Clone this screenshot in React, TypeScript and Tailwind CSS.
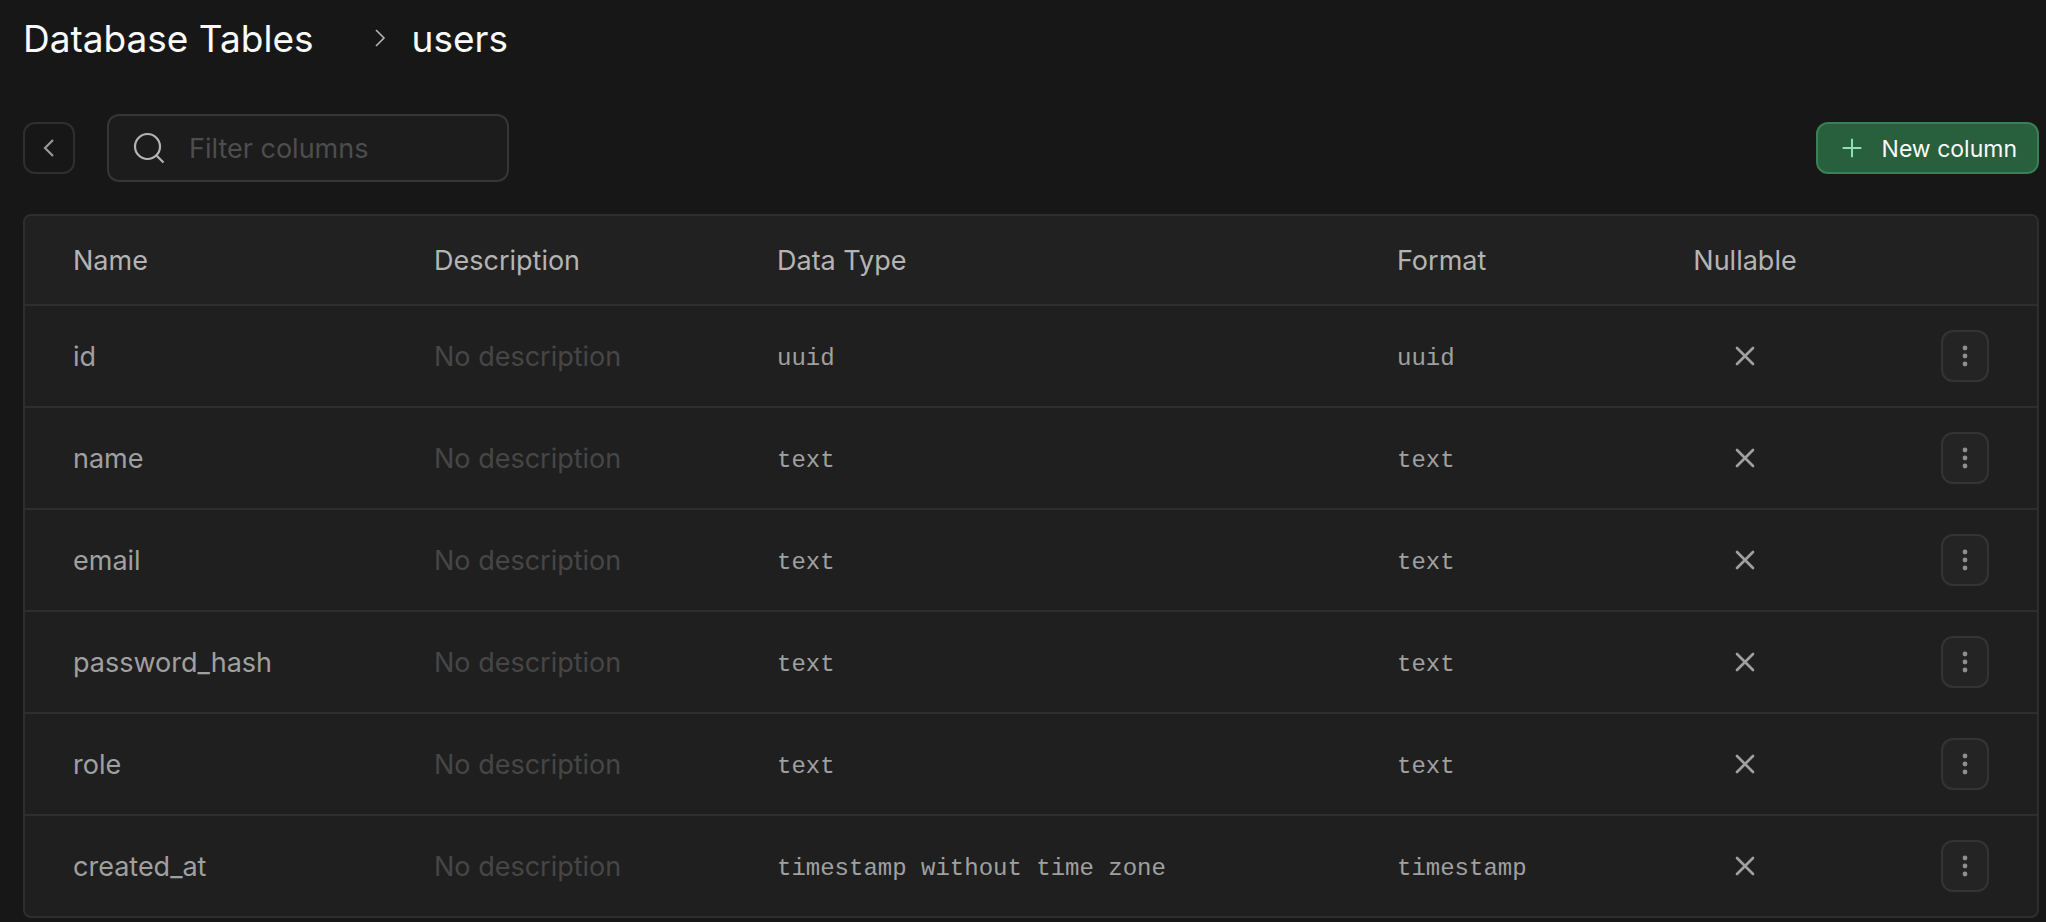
import { useState } from "react";

type Column = { name: string; dataType: string; format: string };

const columns: Column[] = [
  { name: "id", dataType: "uuid", format: "uuid" },
  { name: "name", dataType: "text", format: "text" },
  { name: "email", dataType: "text", format: "text" },
  { name: "password_hash", dataType: "text", format: "text" },
  { name: "role", dataType: "text", format: "text" },
  { name: "created_at", dataType: "timestamp without time zone", format: "timestamp" },
];

function Icon({ d, className }: { d: string; className: string }) {
  return (
    <svg viewBox="0 0 24 24" fill="none" stroke="currentColor" className={className} aria-hidden="true">
      <path d={d} />
    </svg>
  );
}

function Breadcrumb() {
  return (
    <nav aria-label="Breadcrumb" className="flex h-[76px] items-center text-[37px] leading-[48px] text-[#fafafa]">
      <a href="#tables" className="pt-0.5">Database Tables</a>
      <Icon d="m9 18 6-6-6-6" className="mr-4 ml-[50px] size-8 stroke-[1.2] text-[#b4b4b4]" />
      <span className="pt-0.5">users</span>
    </nav>
  );
}

function Toolbar({ filter, onFilter }: { filter: string; onFilter: (value: string) => void }) {
  return (
    <div className="mt-[38px] flex items-center">
      <button type="button" aria-label="Back to tables" className="flex size-[52px] items-center justify-center rounded-xl border-2 border-[#2f2f2f] text-[#9a9a9a]">
        <Icon d="m15 18-6-6 6-6" className="size-8 stroke-[1.6]" />
      </button>
      <label className="ml-8 flex h-[68px] w-[402px] items-center rounded-xl border-2 border-[#363636] bg-[#1c1c1c] pr-4 pl-5">
        <svg viewBox="0 0 40 40" fill="none" stroke="currentColor" strokeWidth="2.2" className="size-10 shrink-0 text-[#b4b4b4]" aria-hidden="true">
          <circle cx="18.500" cy="18.500" r="12.500" />
          <path d="m27 27 7.500 7.500" />
        </svg>
        <input
          type="text"
          aria-label="Filter columns"
          placeholder="Filter columns"
          value={filter}
          onChange={(e) => onFilter(e.target.value)}
          className="ml-5 min-w-0 flex-1 bg-transparent pt-0.5 text-[27px] leading-9 text-[#ededed] outline-none placeholder:text-[#4d4d4d]"
        />
      </label>
      <button type="button" className="ml-auto flex h-[52px] items-center rounded-xl border-2 border-[#3a7f55] bg-[#285f3d] px-5 text-[23px] leading-8 text-[#fafafa]">
        <Icon d="M4 12h16M12 4v16" className="mr-4 size-7 stroke-[1.7] text-[#8fe0b8]" />
        <span className="pt-0.5">New column</span>
      </button>
    </div>
  );
}

function Row({ column }: { column: Column }) {
  return (
    <tr className="h-[102px] *:border-t-2 *:border-[#2e2e2e]">
      <td className="px-12 pt-0.5 text-[#a0a0a0]">{column.name}</td>
      <td className="px-12 pt-0.5 whitespace-nowrap text-[#464646]">No description</td>
      <td className="px-12 pt-1.5 font-['Liberation_Mono',monospace] text-[24px] text-[#a0a0a0]">{column.dataType}</td>
      <td className="px-12 pt-1.5 font-['Liberation_Mono',monospace] text-[24px] text-[#a0a0a0]">{column.format}</td>
      <td>
        <Icon d="M18 6 6 18M6 6l12 12" className="mx-auto size-8 stroke-2 text-[#a0a0a0] [stroke-linecap:round]" />
      </td>
      <td className="pr-12">
        <button type="button" aria-label={`Actions for ${column.name}`} className="ml-auto flex h-[52px] w-12 items-center justify-center rounded-xl border-2 border-[#343434] bg-[#242424]">
          <svg viewBox="0 0 24 24" fill="currentColor" className="size-6 text-[#8f8f8f]" aria-hidden="true">
            <circle cx="12" cy="4" r="2.400" />
            <circle cx="12" cy="12" r="2.400" />
            <circle cx="12" cy="20" r="2.400" />
          </svg>
        </button>
      </td>
    </tr>
  );
}

export default function App() {
  const [filter, setFilter] = useState("");
  const visible = columns.filter((c) => c.name.includes(filter));

  return (
    <main className="min-h-screen bg-[#171717] pr-[7px] pb-1 pl-[23px] font-[Inter,sans-serif]">
      <Breadcrumb />
      <Toolbar filter={filter} onFilter={setFilter} />
      <div className="mt-8 overflow-hidden rounded-lg border-2 border-[#2e2e2e] bg-[#1f1f1f]">
        <table className="w-full table-fixed border-separate border-spacing-0 text-left text-[27px] leading-9">
          <thead className="bg-[#212121] text-[#b4b4b4]">
            <tr className="h-[88px]">
              <th scope="col" className="w-[361px] px-12 pt-0.5 font-normal">Name</th>
              <th scope="col" className="w-[343px] px-12 pt-0.5 font-normal">Description</th>
              <th scope="col" className="px-12 pt-0.5 font-normal">Data Type</th>
              <th scope="col" className="w-[296px] px-12 pt-0.5 font-normal">Format</th>
              <th scope="col" className="w-[200px] pt-0.5 text-center font-normal">Nullable</th>
              <th scope="col" aria-label="Actions" className="w-[192px]" />
            </tr>
          </thead>
          <tbody>
            {visible.map((c) => (
              <Row key={c.name} column={c} />
            ))}
          </tbody>
        </table>
      </div>
    </main>
  );
}
